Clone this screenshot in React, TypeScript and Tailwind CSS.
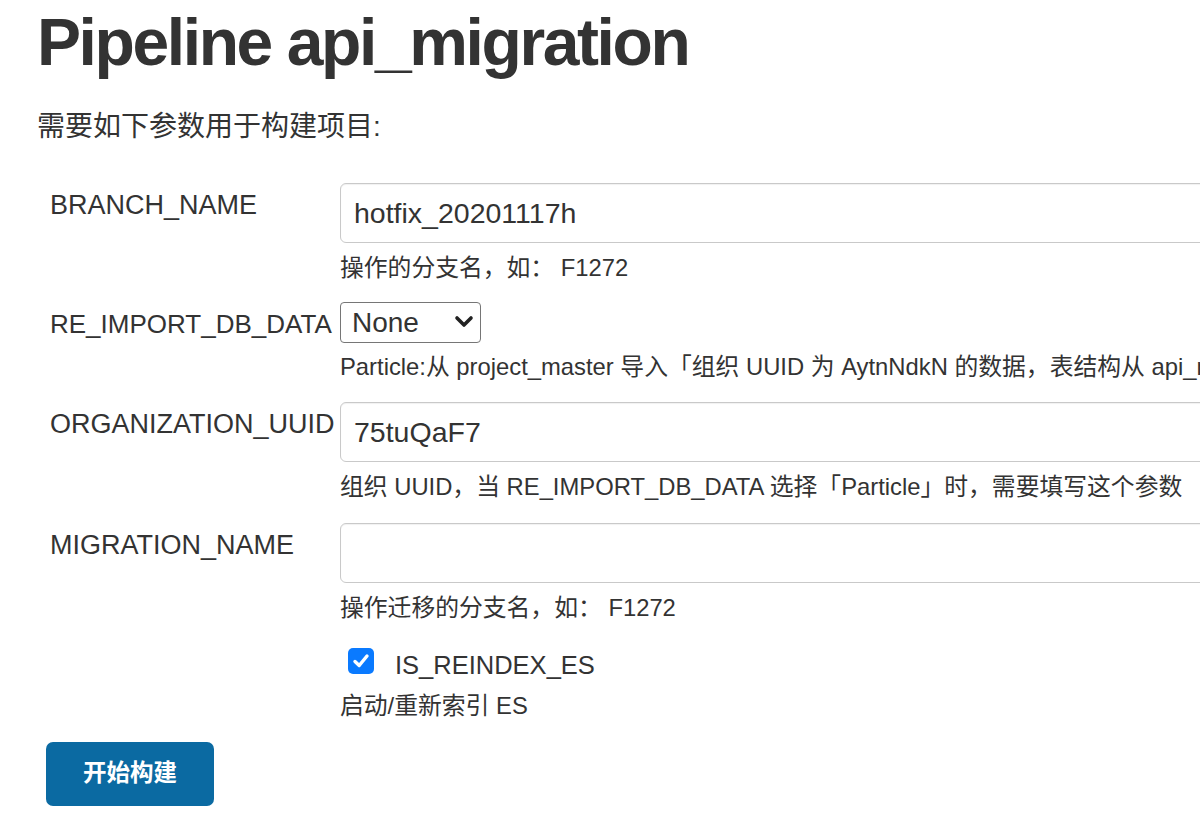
import React from "react";

const FONT = { fontFamily: '"Liberation Sans", "Noto Sans CJK SC", sans-serif' };

function Label({ children, size = "text-[27px]" }: { children: React.ReactNode; size?: string }) {
  return (
    <div className={"w-[303px] shrink-0 pl-[13px] pt-[3px] leading-[39px] text-[#333] whitespace-nowrap " + size}>
      {children}
    </div>
  );
}

function Desc({ children, className = "" }: { children: React.ReactNode; className?: string }) {
  return (
    <div className={"text-[23.8px] leading-[34px] text-[#333] whitespace-nowrap " + className}>{children}</div>
  );
}

function TextInput({ value }: { value: string }) {
  return (
    <div className="h-[60px] w-[1000px] rounded-[6px] border border-[#c9c9c9] bg-white pl-[13px] flex items-center text-[28.5px] text-[#333] shadow-[inset_0_1px_1px_rgba(0,0,0,0.06)]">
      {value}
    </div>
  );
}

export default function App() {
  return (
    <div className="w-[1200px] h-[836px] overflow-hidden bg-white pl-[37px]" style={FONT}>
      <h1 className="mt-[2px] text-[66px] leading-[80px] font-bold tracking-[-2.4px] text-[#333] whitespace-nowrap">
        Pipeline api_migration
      </h1>
      <div className="mt-[25px] text-[28px] leading-[40px] text-[#333]">需要如下参数用于构建项目:</div>

      <div className="mt-[36px] flex flex-col">
        {/* Row 1 */}
        <div className="flex mb-[17px]">
          <Label>BRANCH_NAME</Label>
          <div className="flex flex-col">
            <TextInput value="hotfix_20201117h" />
            <Desc className="mt-[8px]">操作的分支名，如： F1272</Desc>
          </div>
        </div>

        {/* Row 2 */}
        <div className="flex mb-[18px]">
          <Label size="text-[26px]">RE_IMPORT_DB_DATA</Label>
          <div className="flex flex-col">
            <div className="h-[41px] w-[141px] rounded-[4px] border border-[#767676] bg-white flex items-center justify-between pl-[11px] pr-[6px] text-[28px] text-[#333]">
              <span>None</span>
              <svg width="20" height="14" viewBox="0 0 20 14" className="mt-[-2px]">
                <polyline points="3,3 10,10 17,3" fill="none" stroke="#222" strokeWidth="3.6" strokeLinecap="round" strokeLinejoin="round" />
              </svg>
            </div>
            <Desc className="mt-[7px]">Particle:从 project_master 导入「组织 UUID 为 AytnNdkN 的数据，表结构从 api_master 导入」</Desc>
          </div>
        </div>

        {/* Row 3 */}
        <div className="flex mb-[19px]">
          <Label>ORGANIZATION_UUID</Label>
          <div className="flex flex-col">
            <TextInput value="75tuQaF7" />
            <Desc className="mt-[8px]">组织 UUID，当 RE_IMPORT_DB_DATA 选择「Particle」时，需要填写这个参数</Desc>
          </div>
        </div>

        {/* Row 4 */}
        <div className="flex">
          <Label>MIGRATION_NAME</Label>
          <div className="flex flex-col">
            <TextInput value="" />
            <Desc className="mt-[8px]">操作迁移的分支名，如： F1272</Desc>
          </div>
        </div>

        {/* Row 5 checkbox */}
        <div className="flex mt-[16px]">
          <div className="w-[303px] shrink-0" />
          <div className="flex flex-col">
            <div className="flex items-start h-[44px]">
              <div className="ml-[8px] mt-[7px] h-[26px] w-[26px] rounded-[5px] bg-[#0a7aff] flex items-center justify-center">
                <svg width="20" height="20" viewBox="0 0 20 20">
                  <polyline points="4,10.5 8.2,14.5 16,5" fill="none" stroke="white" strokeWidth="3.4" strokeLinecap="round" strokeLinejoin="round" />
                </svg>
              </div>
              <span className="ml-[21px] pt-[4px] text-[25.5px] leading-[40px] text-[#333]">IS_REINDEX_ES</span>
            </div>
            <Desc className="mt-[4px]">启动/重新索引 ES</Desc>
          </div>
        </div>
      </div>

      <button className="ml-[9px] mt-[19px] h-[64px] w-[168px] rounded-[7px] bg-[#0b6aa2] text-white text-[23.5px] font-bold flex items-center justify-center">
        开始构建
      </button>
    </div>
  );
}
